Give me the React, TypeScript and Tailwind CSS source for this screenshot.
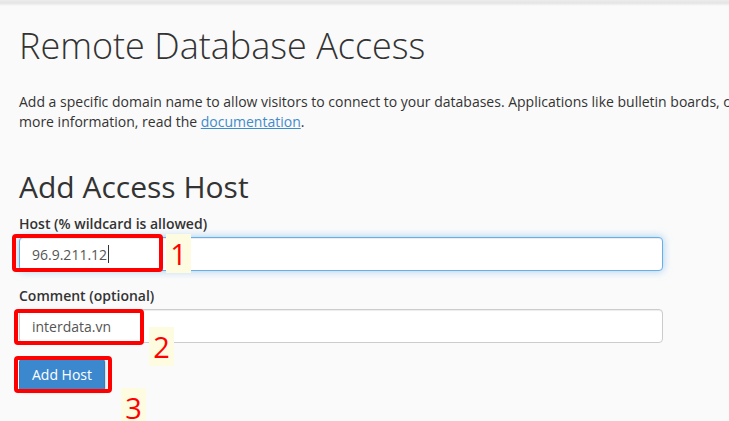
import React from 'react';

function Marker({ n, className }: { n: string; className: string }) {
  return (
    <div
      className={`absolute w-[25px] h-[39px] bg-[#fdfbe0] flex items-center justify-center text-[29px] leading-none text-[#ff0000] ${className}`}
    >
      {n}
    </div>
  );
}

export default function App() {
  return (
    <div
      className="relative w-[729px] h-[421px] overflow-hidden bg-[#fafafa] text-[#333]"
      style={{ fontFamily: '"Open Sans", "Noto Sans", sans-serif' }}
    >
      {/* top bar shadow */}
      <div className="h-[6px] bg-gradient-to-b from-[#ececec] via-[#e4e4e4] to-[#fafafa]" />

      <div className="pl-[19px]">
        <h1 className="mt-[20px] text-[36px] font-light leading-[40px] text-[#333]">Remote Database Access</h1>

        <p className="mt-[26px] text-[14px] leading-[20px] whitespace-nowrap">
          Add a specific domain name to allow visitors to connect to your databases. Applications like bulletin boards, content management systems and shopping carts may need this. For
          <br />
          more information, read the{' '}
          <a href="#" className="text-[#428bca] underline">
            documentation
          </a>
          .
        </p>

        <h2 className="mt-[38px] text-[30px] leading-[33px] font-normal">Add Access Host</h2>

        <form className="w-[644px] mt-[11px]" onSubmit={(e) => e.preventDefault()}>
          {/* Host */}
          <div className="mb-[15px]">
            <label className="block text-[14px] font-semibold leading-[20px] mb-[3px]">Host (% wildcard is allowed)</label>
            <div className="relative">
              <div className="h-[34px] rounded-[4px] border border-[#66afe9] bg-white px-[12px] flex items-center text-[14px] text-[#555] shadow-[inset_0_1px_1px_rgba(0,0,0,0.075),0_0_8px_rgba(102,175,233,0.6)]">
                96.9.211.12
                <span className="ml-[1px] w-px h-[18px] bg-[#333]" />
              </div>
              <div className="absolute left-[-7px] top-[-3px] w-[151px] h-[38px] border-[4px] border-[#ff0000] rounded-[4px]" />
              <Marker n="1" className="left-[147px] top-[-3px]" />
            </div>
          </div>

          {/* Comment */}
          <div className="mb-[15px]">
            <label className="block text-[14px] font-semibold leading-[20px] mb-[3px]">Comment (optional)</label>
            <div className="relative">
              <div className="h-[34px] rounded-[4px] border border-[#ccc] bg-white px-[12px] flex items-center text-[14px] text-[#555] shadow-[inset_0_1px_1px_rgba(0,0,0,0.075)]">
                interdata.vn
              </div>
              <div className="absolute left-[-5px] top-0 w-[130px] h-[36px] border-[4px] border-[#ff0000] rounded-[4px]" />
              <Marker n="2" className="left-[130px] top-[18px]" />
            </div>
          </div>

          {/* Button */}
          <div className="relative w-fit">
            <button
              type="submit"
              className="h-[34px] px-[12px] rounded-[4px] border border-[#357ebd] bg-[#3c88cf] text-white text-[14px] leading-none shadow-[1px_1px_2px_rgba(0,0,0,0.15)]"
            >
              Add Host
            </button>
            <div className="absolute left-[-5px] top-[-2px] w-[98px] h-[37px] border-[4px] border-[#ff0000] rounded-[4px]" />
            <Marker n="3" className="left-[102px] top-[30px]" />
          </div>
        </form>
      </div>
    </div>
  );
}
